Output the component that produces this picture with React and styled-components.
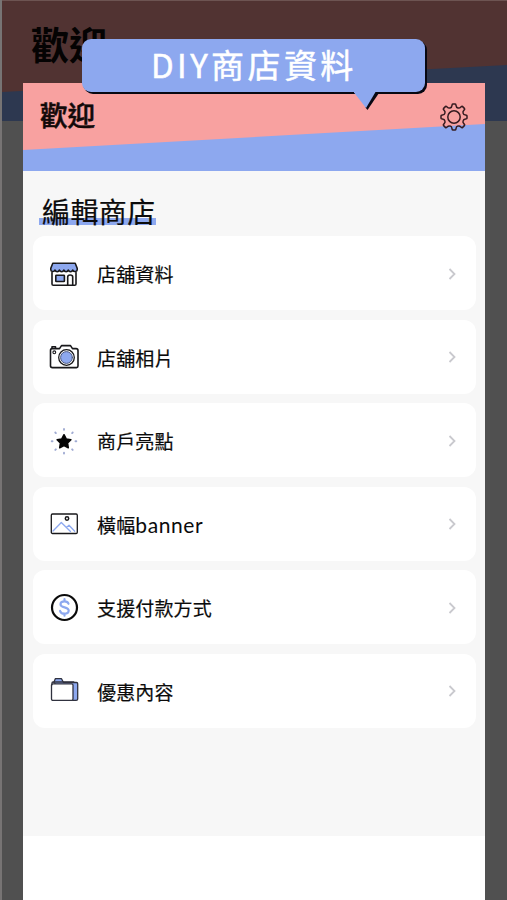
import React from 'react';
import styled, { createGlobalStyle } from 'styled-components';

const GlobalStyle = createGlobalStyle`
  * {
    box-sizing: border-box;
  }
  body {
    margin: 0;
    font-family: "Noto Sans CJK TC", "Noto Sans", sans-serif;
    color: #0b0b0b;
    overflow: hidden;
  }
`;

const Screen = styled.div`
  position: relative;
  width: 507px;
  height: 900px;
  overflow: hidden;
  background: #505050;
  border-left: 2px solid #777474;
`;

const BackHeader = styled.div`
  position: relative;
  isolation: isolate;
  height: 121px;
  padding: 15px 0 0 29px;
  border-top: 1px solid #6d5452;
  background: #2d3850;
  font-size: 38px;
  line-height: 54px;
  font-weight: 700;
  color: #050303;
  &::before {
    content: '';
    position: absolute;
    inset: 0;
    z-index: -1;
    background: #513332;
    clip-path: polygon(0 0, 100% 0, 100% 64px, 0 91px);
  }
`;

const Panel = styled.main`
  position: absolute;
  top: 83px;
  left: 21px;
  width: 462px;
  height: 817px;
  background: #fff;
`;

const Header = styled.header`
  position: relative;
  display: flex;
  justify-content: space-between;
  height: 88px;
  padding: 11px 17px 0 17px;
  background: #8da8ef;
  isolation: isolate;
  &::before {
    content: '';
    position: absolute;
    inset: 0;
    z-index: -1;
    background: #f8a1a0;
    clip-path: polygon(0 0, 100% 0, 100% 41px, 0 67px);
  }
`;

const Welcome = styled.h1`
  margin: 0;
  font-size: 27.5px;
  line-height: 40px;
  font-weight: 500;
  color: #120909;
  -webkit-text-stroke: 0.5px #120909;
`;

const Gear = styled.svg`
  width: 28px;
  height: 28px;
  margin-top: 9px;
`;

const Content = styled.section`
  height: 665px;
  padding: 20px 9px 0 10px;
  background: #f7f7f7;
`;

const Title = styled.h2`
  width: fit-content;
  height: 35px;
  margin: 0 0 10px 6px;
  padding: 0 0 0 3px;
  font-size: 28px;
  line-height: 40px;
  font-weight: 400;
  letter-spacing: 0.4px;
  -webkit-text-stroke: 0.2px #0b0b0b;
  background: linear-gradient(#8da8ef, #8da8ef) 0 27px / 100% 7px no-repeat;
`;

const List = styled.div`
  display: flex;
  flex-direction: column;
  gap: 9.6px;
`;

const Row = styled.div`
  display: flex;
  align-items: center;
  height: 74px;
  padding: 1px 17px 0 16px;
  border-radius: 12px;
  background: #fff;
`;

const Icon = styled.svg`
  width: 30px;
  height: 30px;
  flex: none;
  overflow: visible;
`;

const Label = styled.span`
  flex: 1;
  margin-left: 18px;
  padding-top: 1px;
  font-size: 19px;
  line-height: 28px;
  letter-spacing: 0.15px;
  white-space: nowrap;
  -webkit-text-stroke: 0.2px #0b0b0b;
`;

const Latin = styled.span`
  font-family: Lato, sans-serif;
  font-size: 21px;
  letter-spacing: 0.6px;
  -webkit-text-stroke: 0;
`;

const Chevron = styled.svg`
  width: 14px;
  height: 14px;
`;

const Bubble = styled.div`
  position: absolute;
  top: 39px;
  left: 80px;
  width: 343px;
  height: 53px;
  padding-left: 69px;
  border-radius: 9px;
  background: #8da8ef;
  box-shadow: 1px 1px 0 #080812, 2px 2px 0 #080812;
  font-size: 33px;
  line-height: 50px;
  letter-spacing: 3.4px;
  white-space: nowrap;
  color: #fff;
  -webkit-text-stroke: 0.5px #fff;
`;

const Tail = styled.svg`
  position: absolute;
  left: 271px;
  top: 49px;
  width: 28px;
  height: 24px;
`;

const ink = { stroke: '#18181b', strokeWidth: 1.6, strokeLinejoin: 'round', strokeLinecap: 'round' };

const StoreIcon = () => (
  <Icon viewBox="0 0 30 30" fill="none" {...ink}>
    <path d="M3 13.5V25q0 1.300 1.300 1.300h21.400q1.300 0 1.300-1.300V13.500" />
    <path d="M3.800 4.300h22.400l2 5v1.500c0 2-3.500 2.500-4.400.3-.8 2.200-3.700 2.200-4.500 0-.8 2.200-3.600 2.200-4.400 0-.8 2.200-3.700 2.200-4.500 0-.8 2.200-3.600 2.200-4.400 0C5.200 13.300 1.800 12.800 1.800 10.800V9.300z" fill="#8da8ef" />
    <rect x="6.800" y="16.200" width="8.600" height="6.300" rx=".6" fill="#8da8ef" />
    <path d="M18.700 26v-8q0-2 2.500-2t2.500 2v8" />
  </Icon>
);

const CameraIcon = () => (
  <Icon viewBox="0 0 30 30" fill="none" {...ink}>
    <path d="M3 6.600h7.500l2-3h9l2 3H27q2 0 2 2v15.500q0 1.500-1.500 1.500h-24Q1.500 25.600 1.500 24V8.400q0-1.800 1.500-1.800z" />
    <path d="M3 6V4.800h3.500V6" />
    <circle cx="17.500" cy="15.500" r="7.800" strokeWidth="1.300" />
    <circle cx="17.500" cy="15.500" r="5.900" fill="#8da8ef" stroke="#4e5a80" strokeWidth="1" />
    <circle cx="5.300" cy="10.300" r="1.400" strokeWidth="1.100" />
  </Icon>
);

const StarIcon = () => (
  <Icon viewBox="0 0 30 30">
    <path
      d="M15 8.700l2.200 4.200 4.700.8-3.300 3.400.7 4.700-4.300-2.100-4.300 2.100.7-4.700-3.300-3.400 4.700-.8z"
      fill="#050505"
      stroke="#050505"
      strokeWidth="1.500"
      strokeLinejoin="round"
    />
    {[0, 45, 90, 135, 180, 225, 270, 315].map((deg) => (
      <path key={deg} d="M15 2.900v.8" stroke="#a0abd2" strokeWidth="1.900" strokeLinecap="round" transform={`rotate(${deg} 15 15.200)`} />
    ))}
  </Icon>
);

const ImageIcon = () => (
  <Icon viewBox="0 0 30 30" fill="none" {...ink}>
    <rect x="2.300" y="5" width="26" height="19.500" rx="1.200" strokeWidth="1.300" />
    <path d="M4 22l8.300-8.500 9.200 9M17.500 18.500l2.500-2.300 5.700 6" stroke="#8da8ef" strokeWidth="1.300" />
    <circle cx="18" cy="9.500" r="1.700" strokeWidth="1.500" />
  </Icon>
);

const DollarIcon = () => (
  <Icon viewBox="0 0 30 30" fill="none" strokeLinecap="round">
    <circle cx="15.500" cy="14.500" r="12.500" stroke="#0b0b0b" strokeWidth="2.200" />
    <path d="M19.500 10.800c-.5-1.700-2-2.500-4-2.500-2.400 0-4 1.100-4 2.900 0 4.300 8.200 2 8.200 6.400 0 2-1.800 3.100-4.200 3.100s-4-1-4.400-2.800M15.500 6.200v2M15.500 20.700v2" stroke="#8da8ef" strokeWidth="2.200" />
  </Icon>
);

const FolderIcon = () => (
  <Icon viewBox="0 0 30 30" fill="none" {...ink} stroke="#30323f" strokeWidth="1.300">
    <path d="M4.800 6.500l1.500-3.800h6.200l2 3.800h13q1.200 0 1.200 1.200v15.300q0 1.300-1.500 1.300h-4z" fill="#8da8ef" />
    <rect x="2.500" y="7.800" width="21.500" height="16.500" rx="1.300" fill="#fff" />
    <path d="M3 8.800V7q0-1 1-1h20.800" />
  </Icon>
);

const GearIcon = () => (
  <Gear viewBox="0 0 28 28" fill="none" stroke="#351b20" strokeWidth="1.500" strokeLinejoin="round">
    <path d="M12.700 1h2.600q.6 0 .7 1.400.2 2.200 1.900 2.500 1.500.6 3-.9 1-1 1.500-.6l2.200 2.200q.4.500-.6 1.500-1.500 1.500-.9 3 .3 1.700 2.500 1.900 1.400.1 1.400.7v2.600q0 .6-1.400.7-2.200.2-2.500 1.900-.6 1.500.9 3 1 1 .6 1.500l-2.200 2.200q-.5.400-1.500-.6-1.500-1.500-3-.9-1.700.3-1.900 2.500-.1 1.400-.7 1.400h-2.600q-.6 0-.7-1.400-.2-2.200-1.900-2.500-1.500-.6-3 .9-1 1-1.500.6l-2.200-2.200q-.4-.5.6-1.500 1.500-1.500.9-3-.3-1.700-2.500-1.900Q1 15.900 1 15.300v-2.600q0-.6 1.400-.7 2.200-.2 2.500-1.900.6-1.500-.9-3-1-1-.6-1.500l2.200-2.200q.5-.4 1.500.6 1.500 1.500 3 .9 1.700-.3 1.900-2.500.1-1.400.7-1.400z" />
    <circle cx="14" cy="14" r="6.200" />
  </Gear>
);

const rows = [
  { icon: <StoreIcon />, text: '店舖資料' },
  { icon: <CameraIcon />, text: '店舖相片' },
  { icon: <StarIcon />, text: '商戶亮點' },
  { icon: <ImageIcon />, text: '橫幅', latin: 'banner' },
  { icon: <DollarIcon />, text: '支援付款方式' },
  { icon: <FolderIcon />, text: '優惠內容' },
];

const App = () => {
  return (
    <>
      <GlobalStyle />
      <Screen>
        <BackHeader>歡迎</BackHeader>
        <Panel>
          <Header>
            <Welcome>歡迎</Welcome>
            <GearIcon />
          </Header>
          <Content>
            <Title>編輯商店</Title>
            <List>
              {rows.map((row) => (
                <Row key={row.text}>
                  {row.icon}
                  <Label>
                    {row.text}
                    {row.latin && <Latin>{row.latin}</Latin>}
                  </Label>
                  <Chevron viewBox="0 0 14 14" fill="none" stroke="#c9c9ce" strokeWidth="1.800">
                    <path d="M4.500 2l5 5-5 5" />
                  </Chevron>
                </Row>
              ))}
            </List>
          </Content>
        </Panel>
        <Bubble>
          DIY商店資料
          <Tail viewBox="0 0 28 24">
            <path d="M18 4L12.500 19.500l2 2.500L26 5V4z" fill="#080812" />
            <path d="M1 0v4.500L13 20 22.500 4V0z" fill="#8da8ef" />
          </Tail>
        </Bubble>
      </Screen>
    </>
  );
};

export default App;
